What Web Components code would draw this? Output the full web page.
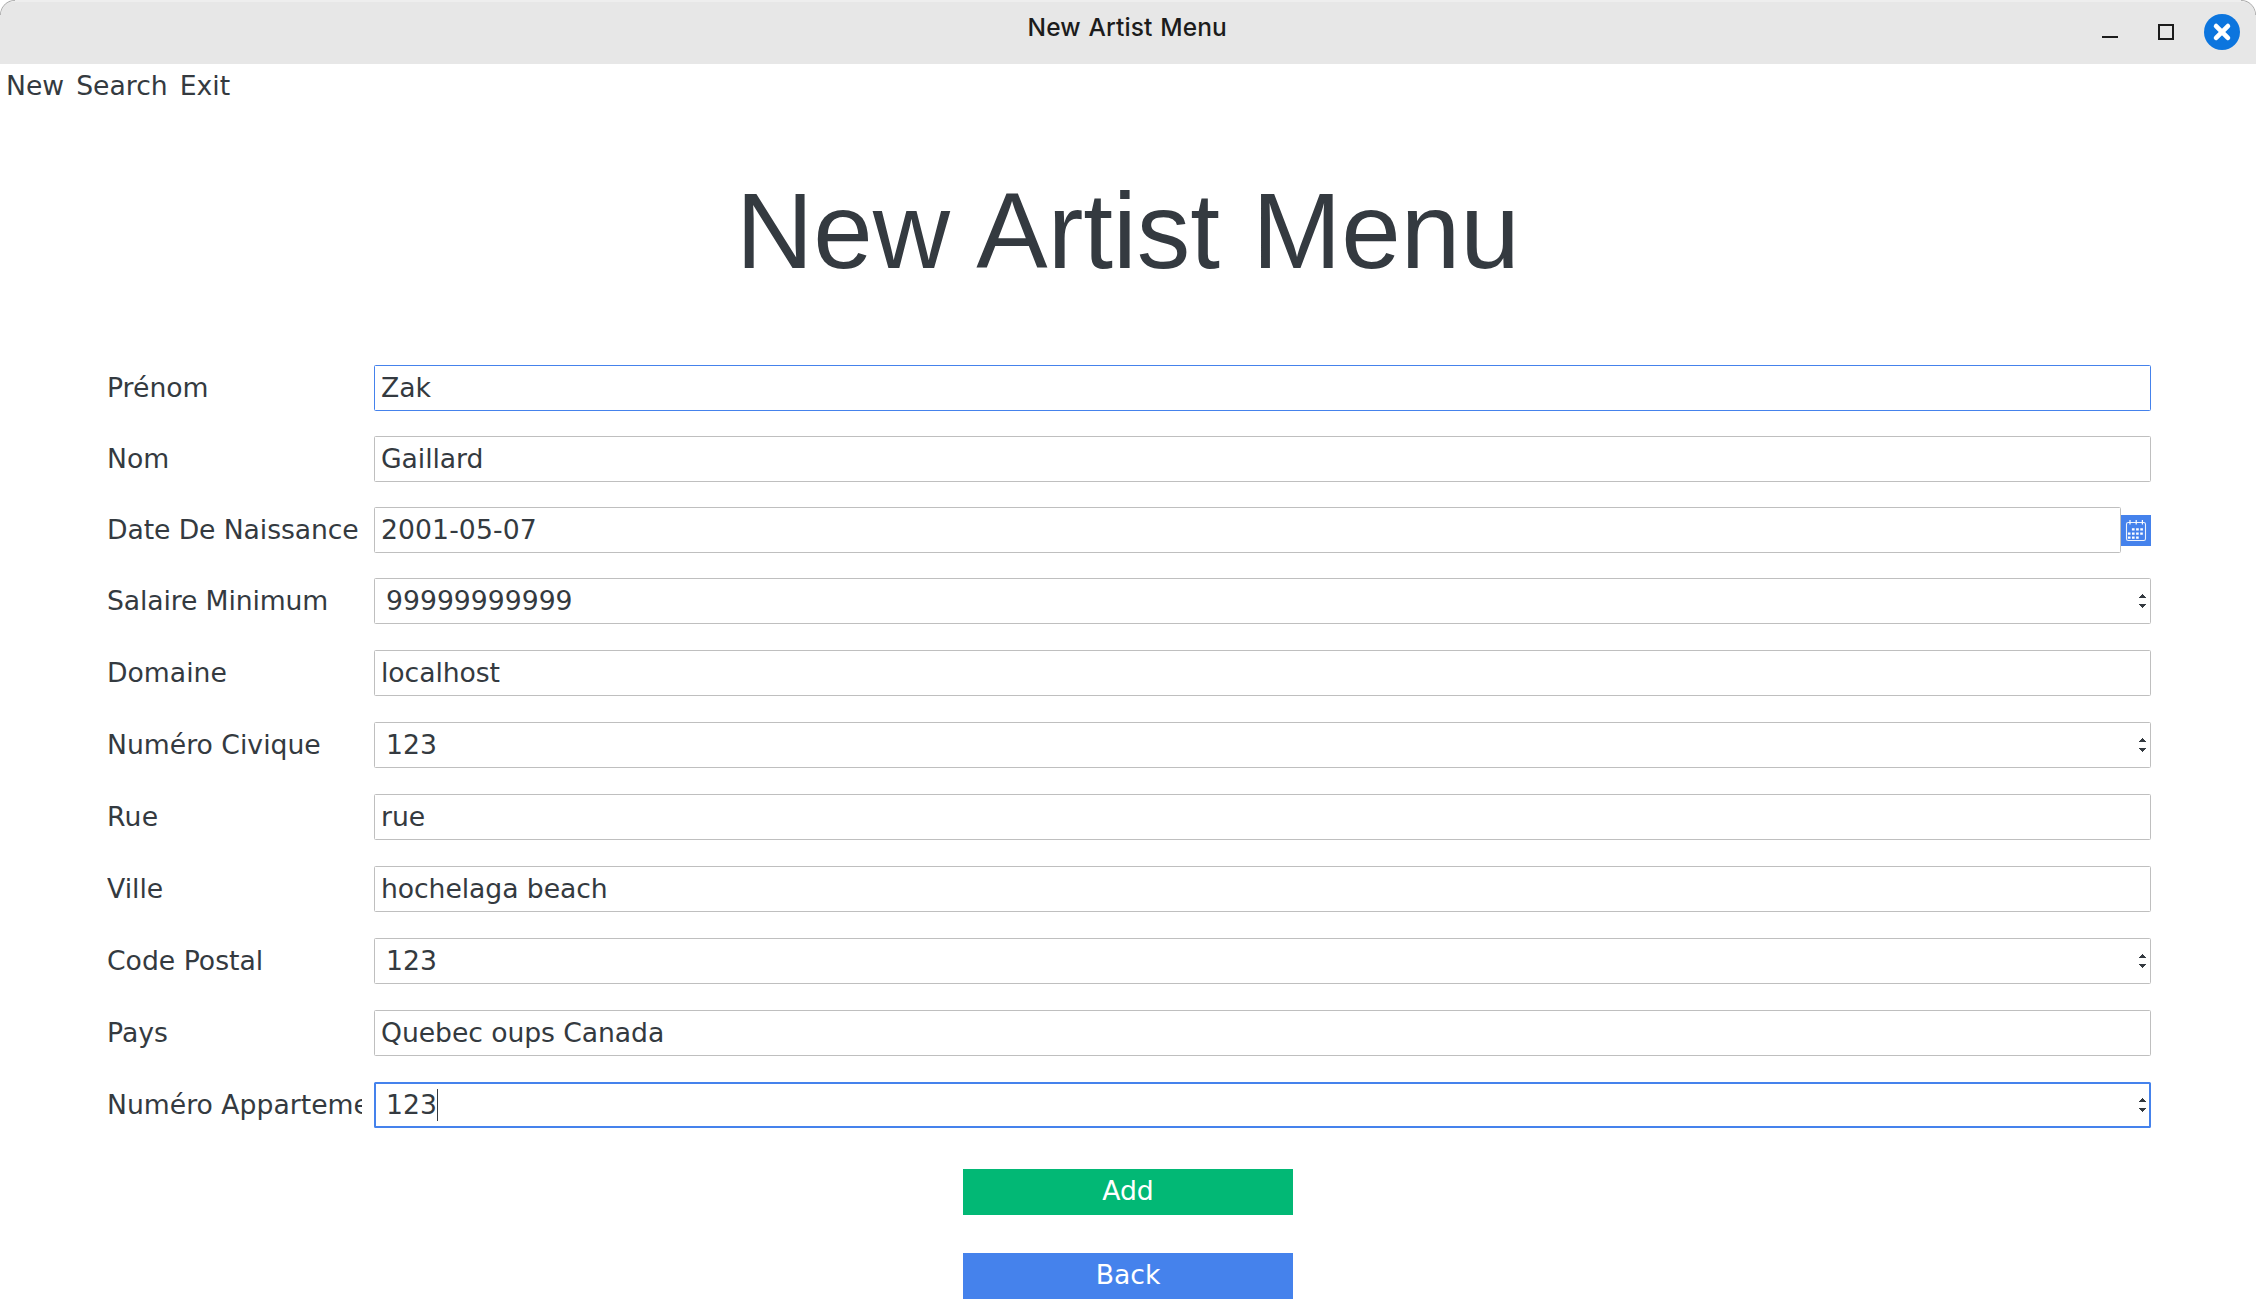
<!DOCTYPE html>
<html lang="fr">
<head>
<meta charset="utf-8">
<title>New Artist Menu</title>
<style>
html,body{margin:0;padding:0;height:1309px;overflow:hidden;background:#fff}
</style>
</head>
<body>
<artist-window></artist-window>
<script>
const define = (name, css, html) => {
  customElements.define(name, class extends HTMLElement {
    constructor() {
      super();
      this.attachShadow({ mode: 'open' }).innerHTML = `<style>*{box-sizing:border-box}${css}</style>${html}`;
    }
  });
};

define('window-button', `
  :host{display:block;flex:none}
  ::slotted(svg){display:block}`, `<slot></slot>`);

define('title-bar', `
  :host{display:grid;grid-template-columns:1fr auto 1fr;height:64px;box-sizing:border-box;
    background:
      radial-gradient(circle at 15px 15px,transparent 13.8px,#a8a8a8 14.6px) 0 0/15px 15px no-repeat,
      radial-gradient(circle at 0 15px,transparent 13.8px,#a8a8a8 14.6px) 100% 0/15px 15px no-repeat,
      linear-gradient(#eee 2px,#e7e7e7 2px);
    border-radius:15px 15px 0 0}
  .title{grid-column:2;font:500 24.5px/30px Inter,sans-serif;color:#1c1c1c;padding-top:12px;white-space:nowrap;letter-spacing:.1px;word-spacing:1.2px;margin-right:1.5px}
  .controls{grid-column:3;justify-self:end;display:flex;align-items:center;padding-right:16px}
  svg{display:block}`, `
  <div class="title"><slot></slot></div>
  <div class="controls">
    <window-button><svg width="102" height="36" viewBox="0 0 102 36"><path d="M0 23h16" stroke="#1c1c1c" stroke-width="2"/><path d="M57 11h14v14H57z" fill="none" stroke="#1c1c1c" stroke-width="2"/></svg></window-button>
    <window-button><svg width="36" height="36" viewBox="0 0 36 36"><circle cx="18" cy="18" r="18" fill="#0c75de"/><path d="M12.1 12.1l11.8 11.8M23.9 12.1L12.1 23.9" stroke="#fff" stroke-width="4.7" stroke-linecap="round"/></svg></window-button>
  </div>`);

define('menu-bar', `
  :host{display:flex;gap:12px;padding:6px 0 0 6px;height:47px;box-sizing:border-box;line-height:31px}`, `<slot></slot>`);

define('menu-entry', `:host{display:block;white-space:nowrap}`, `<slot></slot>`);

define('page-title', `
  :host{display:block;text-align:center;font:107px/124px "Liberation Sans",Arial,sans-serif;word-spacing:2.4px;height:254px;padding-top:58px;box-sizing:border-box}`, `<slot></slot>`);

define('spin-arrows', `:host{display:block;width:7px;height:14px}svg{display:block}`,
  `<svg width="7" height="14" viewBox="0 0 7 14" shape-rendering="crispEdges" fill="#343a40"><path d="M3 0h1v1h1v1h1v1h1v1H0V3h1V2h1V1h1z"/><path d="M0 10h7v1H6v1H5v1H4v1H3v-1H2v-1H1v-1H0z"/></svg>`);

define('calendar-button', `
  :host{display:block;width:30px;height:31px;background:#4582ec;flex:none}svg{display:block}`,
  `<svg width="30" height="31" viewBox="0 0 30 31" fill="none" stroke="#fff"><rect x="5.5" y="7.5" width="19" height="18" rx="1.8" stroke-width="1.1" stroke-opacity=".9"/><path d="M9 5v4.5M15.2 5v4.5M21.4 5v4.5" stroke-width="1.2"/><path d="M10.9 14.4h11" stroke-width="2.2" stroke-dasharray="2.7 1.5"/><path d="M6.9 18.6h15M6.9 22.6h11" stroke-width="2.2" stroke-dasharray="2.6 1.5"/></svg>`);

customElements.define('form-row', class extends HTMLElement {
  connectedCallback() {
    const type = this.getAttribute('type') || 'text';
    const tracking = this.getAttribute('tracking') || '0';
    this.attachShadow({ mode: 'open' }).innerHTML = `<style>
      *{box-sizing:border-box}
      :host{display:flex;align-items:center;height:46px;line-height:31px;white-space:nowrap}
      .label{width:255px;overflow:hidden;margin-right:12px;flex:none;padding-bottom:1px;letter-spacing:${tracking}px}
      .field{flex:1;height:46px;border:1px solid #bfbfbf;border-radius:1.5px;display:flex;align-items:center;padding:0 4px 0 6px;background:#fff}
      .value{padding-bottom:1px}
      .text .value{letter-spacing:-.08px}
      .date .value{letter-spacing:.08px}
      .spin{padding-left:11px}
      .active{border-color:#4582ec}
      .focus{border:2px solid #4582ec;padding:0 3px 0 10px}
      .caret{width:1px;height:32px;background:#343a40}
      spin-arrows{margin-left:auto}
    </style>
    <div class="label">${this.getAttribute('label')}</div>
    <div class="field ${type} ${this.getAttribute('state') || ''}"><span class="value"><slot></slot></span>${this.getAttribute('state') === 'focus' ? '<span class="caret"></span>' : ''}${type === 'spin' ? '<spin-arrows></spin-arrows>' : ''}</div>
    ${type === 'date' ? '<calendar-button></calendar-button>' : ''}`;
  }
});

define('action-button', `
  :host{display:block;width:330px;height:46px;background:#4582ec;color:#fff;text-align:center;line-height:44px}
  :host([kind=success]){background:#02b875}`, `<slot></slot>`);

define('artist-form', `
  :host{display:flex;flex-direction:column;padding:0 105px 0 107px}
  .rows{display:flex;flex-direction:column;gap:26px}
  .head{gap:25px;margin-bottom:26px}`, `
  <div class="rows head">
    <form-row label="Prénom" state="active">Zak</form-row>
    <form-row label="Nom">Gaillard</form-row>
    <form-row label="Date De Naissance" type="date" tracking="-0.1">2001-05-07</form-row>
    <form-row label="Salaire Minimum" type="spin" tracking="-0.14">99999999999</form-row>
  </div>
  <div class="rows">
    <form-row label="Domaine">localhost</form-row>
    <form-row label="Numéro Civique" type="spin">123</form-row>
    <form-row label="Rue" tracking="0.3">rue</form-row>
    <form-row label="Ville">hochelaga beach</form-row>
    <form-row label="Code Postal" type="spin">123</form-row>
    <form-row label="Pays">Quebec oups Canada</form-row>
    <form-row label="Numéro Apparteme" type="spin" state="focus">123</form-row>
  </div>`);

define('artist-window', `
  :host{display:block;width:2256px;height:1309px;overflow:hidden;color:#343a40;font:26.67px "DejaVu Sans",sans-serif}
  .actions{display:flex;flex-direction:column;align-items:center;gap:38px;padding-top:41px}`, `
  <title-bar>New Artist Menu</title-bar>
  <menu-bar><menu-entry>New</menu-entry><menu-entry>Search</menu-entry><menu-entry>Exit</menu-entry></menu-bar>
  <page-title>New Artist Menu</page-title>
  <artist-form></artist-form>
  <div class="actions"><action-button kind="success">Add</action-button><action-button>Back</action-button></div>`);
</script>
</body>
</html>
